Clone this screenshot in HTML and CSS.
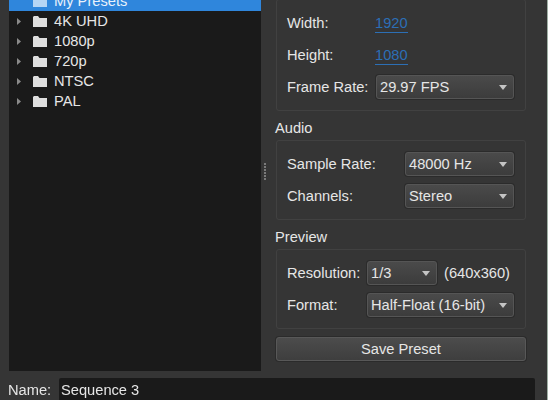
FILE: index.html
```html
<!DOCTYPE html>
<html lang="en">
<head>
  <meta charset="UTF-8" />
  <title>Sequence Presets</title>
  <link rel="stylesheet" href="styles.css">
</head>
<body>
  <div class="main">
    <div class="tree">
      <div class="row selected">
        <span class="arrow-space"></span>
        <svg class="folder" viewBox="0 0 14 11"><path d="M0 1 L1 0 H5 L6.5 2 H14 V11 H0 Z"/></svg>
        <span>My Presets</span>
      </div>
      <div class="row">
        <svg class="arrow" viewBox="0 0 4 7"><path d="M0 0 L4 3.5 L0 7 Z"/></svg>
        <svg class="folder" viewBox="0 0 14 11"><path d="M0 1 L1 0 H5 L6.5 2 H14 V11 H0 Z"/></svg>
        <span>4K UHD</span>
      </div>
      <div class="row">
        <svg class="arrow" viewBox="0 0 4 7"><path d="M0 0 L4 3.5 L0 7 Z"/></svg>
        <svg class="folder" viewBox="0 0 14 11"><path d="M0 1 L1 0 H5 L6.5 2 H14 V11 H0 Z"/></svg>
        <span>1080p</span>
      </div>
      <div class="row">
        <svg class="arrow" viewBox="0 0 4 7"><path d="M0 0 L4 3.5 L0 7 Z"/></svg>
        <svg class="folder" viewBox="0 0 14 11"><path d="M0 1 L1 0 H5 L6.5 2 H14 V11 H0 Z"/></svg>
        <span>720p</span>
      </div>
      <div class="row">
        <svg class="arrow" viewBox="0 0 4 7"><path d="M0 0 L4 3.5 L0 7 Z"/></svg>
        <svg class="folder" viewBox="0 0 14 11"><path d="M0 1 L1 0 H5 L6.5 2 H14 V11 H0 Z"/></svg>
        <span>NTSC</span>
      </div>
      <div class="row">
        <svg class="arrow" viewBox="0 0 4 7"><path d="M0 0 L4 3.5 L0 7 Z"/></svg>
        <svg class="folder" viewBox="0 0 14 11"><path d="M0 1 L1 0 H5 L6.5 2 H14 V11 H0 Z"/></svg>
        <span>PAL</span>
      </div>
    </div>

    <div class="splitter"><div class="grip"></div></div>

    <div class="settings">
      <div class="group video">
        <span>Width:</span>
        <div><span class="link">1920</span></div>
        <span>Height:</span>
        <div><span class="link">1080</span></div>
        <span>Frame Rate:</span>
        <div class="select">29.97 FPS</div>
      </div>

      <h3>Audio</h3>
      <div class="group audio">
        <span>Sample Rate:</span>
        <div class="select">48000 Hz</div>
        <span>Channels:</span>
        <div class="select">Stereo</div>
      </div>

      <h3>Preview</h3>
      <div class="group preview">
        <span>Resolution:</span>
        <div class="res-row">
          <div class="select small">1/3</div>
          <span>(640x360)</span>
        </div>
        <span>Format:</span>
        <div class="select">Half-Float (16-bit)</div>
      </div>

      <button type="button">Save Preset</button>
    </div>
  </div>

  <div class="name-row">
    <label>Name:</label>
    <div class="name-input">Sequence 3</div>
  </div>
</body>
</html>
```

FILE: styles.css
```css
html, body {
  margin: 0;
  height: 400px;
  overflow: hidden;
}
body {
  background-color: #353535;
  color: #e6e6e6;
  font-family: "Liberation Sans", Arial, sans-serif;
  font-size: 14.67px;
  border-right: 1px solid #9fb0a5;
}
.main {
  display: flex;
  height: 380px;
  margin-top: -9px;
  padding-left: 9px;
}
.tree {
  width: 252px;
  height: 380px;
  background-color: #1a1a1a;
}
.row {
  display: flex;
  align-items: center;
  height: 20px;
}
.row.selected {
  background-color: #2f86dc;
  color: #e8f1fb;
}
.row.selected .folder {
  fill: #b5d5f5;
}
.arrow-space {
  width: 5px;
  margin-left: 8px;
}
.arrow {
  width: 4px;
  height: 7px;
  margin-left: 8px;
  margin-right: 1px;
  fill: #8a8a8a;
}
.folder {
  width: 14px;
  height: 11px;
  margin-left: 11px;
  margin-right: 7px;
  fill: #dedede;
}
.splitter {
  display: flex;
  align-items: center;
  justify-content: center;
  width: 15px;
  height: 380px;
}
.grip {
  width: 2px;
  height: 17px;
  margin-left: -7px;
  margin-top: -19px;
  background: repeating-linear-gradient(#7a7a7a 0 2px, #353535 2px 3px);
}
.settings {
  width: 250px;
  padding-top: 8px;
}
.group {
  display: grid;
  grid-auto-rows: 24px;
  align-items: center;
  row-gap: 8px;
  padding: 11px 11px 11px 10px;
  border: 1px solid #414141;
  border-radius: 3px;
}
.video {
  grid-template-columns: 89px 1fr;
}
.audio {
  grid-template-columns: 118px 1fr;
}
.preview {
  grid-template-columns: 80px 1fr;
}
h3 {
  margin: 8px 0 3px -1px;
  font-size: 14.67px;
  font-weight: normal;
  line-height: 18px;
}
.link {
  display: inline-block;
  height: 18px;
  line-height: 18px;
  margin-left: -1px;
  color: #2c6fb5;
  border-bottom: 1px solid #2c6fb5;
}
.select {
  position: relative;
  height: 22px;
  line-height: 22px;
  padding-left: 3px;
  border: 1px solid #555555;
  border-radius: 3px;
  background: linear-gradient(#4a4a4a, #3c3c3c);
  box-shadow: 0 0 0 1px #2b2b2b;
}
.select::after {
  content: "";
  position: absolute;
  right: 6px;
  top: 9px;
  border-left: 4px solid transparent;
  border-right: 4px solid transparent;
  border-top: 5px solid #c4c4c4;
}
.select.small {
  width: 65px;
}
.res-row {
  display: flex;
  align-items: center;
  gap: 7px;
}
button {
  display: block;
  width: 250px;
  height: 24px;
  margin-top: 8px;
  padding: 0;
  font-family: inherit;
  font-size: 14.67px;
  color: #e6e6e6;
  border: 1px solid #585858;
  border-radius: 3px;
  background: linear-gradient(#4c4c4c, #3e3e3e);
  box-shadow: 0 0 0 1px #2b2b2b;
}
.name-row {
  display: flex;
  align-items: center;
  position: fixed;
  left: 8px;
  top: 378px;
}
label {
  width: 51px;
}
.name-input {
  width: 474px;
  height: 24px;
  line-height: 24px;
  padding-left: 2px;
  background-color: #1a1a1a;
  border-radius: 2px;
}
```
